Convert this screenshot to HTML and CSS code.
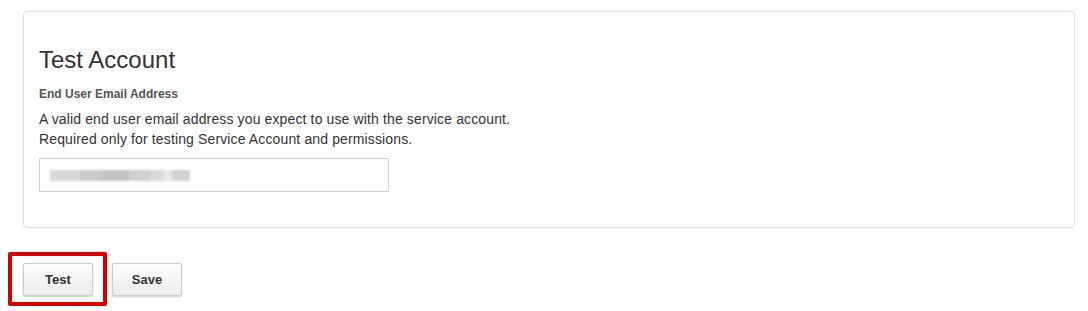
FILE: index.html
```html
<!DOCTYPE html>
<html>
<head>
<meta charset="utf-8">
<link rel="stylesheet" href="styles.css">
</head>
<body>
<div class="card">
  <h2 class="title">Test Account</h2>
  <label class="label">End User Email Address</label>
  <p class="help">A valid end user email address you expect to use with the service account.<br>Required only for testing Service Account and permissions.</p>
  <div class="input">
    <span class="blur"><i class="b1"></i><i class="b2"></i><i class="b3"></i><i class="b4"></i><i class="b5"></i><i class="b6"></i><i class="b7"></i></span>
  </div>
</div>
<div class="actions">
  <div class="btn-wrap">
    <button class="btn">Test</button>
    <span class="highlight"></span>
  </div>
  <button class="btn">Save</button>
</div>
</body>
</html>
```
FILE: styles.css
```css
html, body {
  margin: 0;
  padding: 0;
  background: #fff;
  font-family: "Liberation Sans", Arial, sans-serif;
  color: #333;
}
body {
  min-height: 311px;
}
.card {
  margin: 11px 0 0 23px;
  width: 1020px;
  height: 215px;
  border: 1px solid #ddd;
  border-radius: 4px;
  padding: 0 15px;
  box-sizing: content-box;
  box-shadow: 0 1px 1px rgba(0,0,0,0.04);
}
.title {
  margin: 34px 0 0;
  font-size: 24px;
  font-weight: normal;
  line-height: 28px;
  color: #333;
}
.label {
  display: block;
  margin-top: 12px;
  font-size: 12px;
  font-weight: bold;
  color: #555;
  line-height: 16px;
}
.help {
  margin: 7px 0 0;
  font-size: 14px;
  line-height: 20px;
  letter-spacing: 0.13px;
  color: #333;
}
.input {
  margin-top: 9px;
  width: 338px;
  height: 32px;
  border: 1px solid #ccc;
  border-radius: 1px;
  display: flex;
  align-items: center;
  padding-left: 10px;
  box-sizing: content-box;
}
.blur {
  display: flex;
  height: 11px;
  filter: blur(1px);
}
.blur i { display: block; height: 11px; }
.blur .b1 { width: 30px; background: #d8d8d8; }
.blur .b2 { width: 20px; background: #cbcbcb; }
.blur .b3 { width: 30px; background: #c6c6c6; }
.blur .b4 { width: 20px; background: #d0d0d0; }
.blur .b5 { width: 14px; background: #dadada; }
.blur .b6 { width: 8px; background: #e8e8e8; }
.blur .b7 { width: 18px; background: #d2d2d2; }
.actions {
  display: flex;
  gap: 19px;
  margin: 35px 0 0 23px;
}
.btn-wrap { position: relative; }
.btn {
  display: block;
  width: 70px;
  height: 33px;
  border: 1px solid #ccc;
  border-radius: 2px;
  background: linear-gradient(#fdfdfd, #ececec);
  box-shadow: 0 1px 2px rgba(0,0,0,0.2);
  font-family: "Liberation Sans", Arial, sans-serif;
  font-size: 13px;
  font-weight: bold;
  color: #333;
  padding: 0;
}
.highlight {
  position: absolute;
  left: -15px;
  top: -11px;
  width: 91px;
  height: 46px;
  border: 4px solid #d40000;
  border-radius: 2px;
}
```
